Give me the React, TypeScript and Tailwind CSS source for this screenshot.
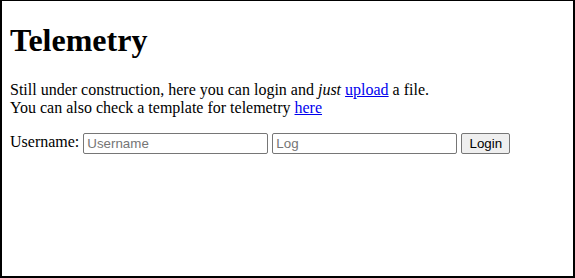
export default function App() {
  return (
    <div className="h-[278px] w-[575px] border-t border-l-2 border-r-2 border-b-2 border-black bg-white px-2 font-['Liberation_Serif',serif] text-base text-black">
      <h1 className="pt-[21.44px] pb-[21.44px] text-[32px] leading-[normal] font-bold">Telemetry</h1>
      <p className="leading-[normal]">
        Still under construction, here you can login and <i>just</i>{" "}
        <a href="#" className="text-[#0000ee] underline">upload</a> a file.
        <br />
        You can also check a template for telemetry{" "}
        <a href="#" className="text-[#0000ee] underline">here</a>
      </p>
      <form className="mt-4 leading-[normal]" onSubmit={(e) => e.preventDefault()}>
        <label htmlFor="user">Username:</label>{" "}
        <input
          id="user"
          type="text"
          placeholder="Username"
          className="h-[21px] w-[185px] rounded-[2px] border border-[#767676] px-[3px] align-middle font-['Liberation_Sans',Arial,sans-serif] text-[13.33px] placeholder:text-[#757575]"
        />{" "}
        <input
          type="text"
          placeholder="Log"
          className="h-[21px] w-[185px] rounded-[2px] border border-[#767676] px-[3px] align-middle font-['Liberation_Sans',Arial,sans-serif] text-[13.33px] placeholder:text-[#757575]"
        />{" "}
        <button
          type="submit"
          className="h-[21px] w-[49px] rounded-[2px] border border-[#767676] bg-[#efefef] align-middle font-['Liberation_Sans',Arial,sans-serif] text-[13.33px] text-black"
        >
          Login
        </button>
      </form>
    </div>
  );
}
